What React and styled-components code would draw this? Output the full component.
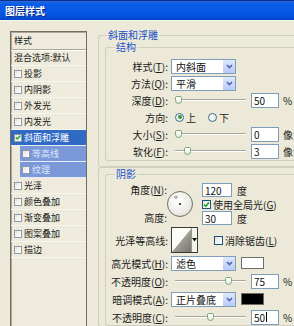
import styled, { createGlobalStyle } from "styled-components"

const GlobalStyle = createGlobalStyle`
  html, body { margin: 0; padding: 0; background: #ece9d8; }
  body { font-family: "Noto Sans CJK SC", "Noto Sans", sans-serif; }
`

const effects = [
    { name: "投影" },
    { name: "内阴影" },
    { name: "外发光" },
    { name: "内发光" },
    { name: "斜面和浮雕", checked: true, selected: true },
    { name: "等高线", sub: true },
    { name: "纹理", sub: true },
    { name: "光泽" },
    { name: "颜色叠加" },
    { name: "渐变叠加" },
    { name: "图案叠加" },
    { name: "描边" },
]

function Check({ color = "#21a121" }) {
    return (
        <svg width="7" height="7" viewBox="0 0 7 7">
            <polyline points="1,3.5 2.8,5.3 6,1.5" fill="none" stroke={color} strokeWidth="1.6" />
        </svg>
    )
}

function Chevron() {
    return (
        <svg width="7" height="5" viewBox="0 0 7 5">
            <polyline points="1,1 3.5,3.5 6,1" fill="none" stroke="#4d64a8" strokeWidth="1.6" />
        </svg>
    )
}

function Dropdown({ value }) {
    return (
        <Select>
            <SelectText>{value}</SelectText>
            <DropBtn><Chevron /></DropBtn>
        </Select>
    )
}

function Slider({ pos }) {
    return (
        <Track>
            <Thumb $pos={pos} />
        </Track>
    )
}

export default function App() {
    return (
        <>
            <GlobalStyle />
            <Window>
                <TitleBar>图层样式</TitleBar>
                <Body>
                    <StyleList>
                        <ListHeader>样式</ListHeader>
                        <ListRow>混合选项:默认</ListRow>
                        {effects.map((e) =>
                            <ListRow key={e.name} $selected={e.selected} $sub={e.sub}>
                                <ListBox>{e.checked && <Check />}</ListBox>
                                <span>{e.name}</span>
                            </ListRow>)}
                    </StyleList>

                    <RightPane>
                        <Group $pb={5}>
                            <Legend $ml={2}>斜面和浮雕</Legend>
                            <SubGroup $pt={5} $pb={1}>
                                <Legend $ml={9}>结构</Legend>
                                <Rows $gap={1}>
                                    <Row>
                                        <Label>样式(<u>T</u>):</Label>
                                        <Dropdown value="内斜面" />
                                    </Row>
                                    <Row>
                                        <Label>方法(<u>Q</u>):</Label>
                                        <Dropdown value="平滑" />
                                    </Row>
                                    <Row>
                                        <Label>深度(<u>D</u>):</Label>
                                        <Slider pos={0} />
                                        <Input>50</Input>
                                        <Unit>%</Unit>
                                    </Row>
                                    <Row>
                                        <Label>方向:</Label>
                                        <RadioGroup>
                                            <Radio $on />
                                            <RadioText>上</RadioText>
                                            <Radio />
                                            <RadioText>下</RadioText>
                                        </RadioGroup>
                                    </Row>
                                    <Row>
                                        <Label>大小(<u>S</u>):</Label>
                                        <Slider pos={0} />
                                        <Input>0</Input>
                                        <Unit>像素</Unit>
                                    </Row>
                                    <Row>
                                        <Label>软化(<u>F</u>):</Label>
                                        <Slider pos={9} />
                                        <Input>3</Input>
                                        <Unit>像素</Unit>
                                    </Row>
                                </Rows>
                            </SubGroup>
                        </Group>

                        <Group>
                            <SubGroup $pt={3}>
                                <Legend $ml={9}>阴影</Legend>
                                <Rows $gap={2}>
                                    <AngleBlock>
                                        <AngleLabels>
                                            <span>角度(<u>N</u>):</span>
                                            <span>高度:</span>
                                        </AngleLabels>
                                        <Dial>
                                            <svg width="24" height="24" viewBox="0 0 24 24">
                                                <circle cx="12" cy="12" r="1.1" fill="#222" />
                                                <path d="M8 3.2 v4 M6 5.2 h4" stroke="#8a8f9a" strokeWidth="0.9" />
                                            </svg>
                                        </Dial>
                                        <AngleFields>
                                            <FieldRow>
                                                <Input $w={30} $h={14}>120</Input>
                                                <Unit $ml={5}>度</Unit>
                                            </FieldRow>
                                            <FieldRow>
                                                <CheckBox><Check /></CheckBox>
                                                <CheckText>使用全局光(<u>G</u>)</CheckText>
                                            </FieldRow>
                                            <FieldRow>
                                                <Input $w={30} $h={14}>30</Input>
                                                <Unit $ml={5}>度</Unit>
                                            </FieldRow>
                                        </AngleFields>
                                    </AngleBlock>

                                    <Row $h={26}>
                                        <Label>光泽等高线:</Label>
                                        <Contour>
                                            <svg width="19" height="24" viewBox="0 0 19 24">
                                                <defs>
                                                    <linearGradient id="cg" x1="0" y1="0" x2="1" y2="1">
                                                        <stop offset="0" stopColor="#c9c7bd" />
                                                        <stop offset="1" stopColor="#76746c" />
                                                    </linearGradient>
                                                </defs>
                                                <rect width="19" height="24" fill="#fbfbf8" />
                                                <polygon points="0,24 19,1 19,24" fill="url(#cg)" />
                                            </svg>
                                            <ContourArrow>
                                                <svg width="5" height="4" viewBox="0 0 5 4">
                                                    <polygon points="0,0 5,0 2.5,3.5" fill="#111" />
                                                </svg>
                                            </ContourArrow>
                                        </Contour>
                                        <CheckBox $ml={16} />
                                        <CheckText>消除锯齿(<u>L</u>)</CheckText>
                                    </Row>

                                    <Row>
                                        <Label>高光模式(<u>H</u>):</Label>
                                        <Dropdown value="滤色" />
                                        <Swatch $color="#ffffff" />
                                    </Row>
                                    <Row>
                                        <Label>不透明度(<u>O</u>):</Label>
                                        <Slider pos={50} />
                                        <Input>75</Input>
                                        <Unit>%</Unit>
                                    </Row>
                                    <Row>
                                        <Label>暗调模式(<u>A</u>):</Label>
                                        <Dropdown value="正片叠底" />
                                        <Swatch $color="#000000" />
                                    </Row>
                                    <Row>
                                        <Label>不透明度(<u>C</u>):</Label>
                                        <Slider pos={32} />
                                        <Input>50<Caret /></Input>
                                        <Unit>%</Unit>
                                        <RedMark />
                                    </Row>
                                </Rows>
                            </SubGroup>
                        </Group>
                    </RightPane>
                </Body>
            </Window>
        </>
    )
}

const Window = styled.div`
width: 294px;
height: 326px;
overflow: hidden;
background: #ece9d8;
display: flex;
flex-direction: column;
`

const TitleBar = styled.div`
height: 20px;
flex-shrink: 0;
box-sizing: border-box;
padding-left: 5px;
display: flex;
align-items: center;
background: linear-gradient(#2a66d8 0, #0a5de9 3px, #0659e7 55%, #0450dc 85%, #0340c0 100%);
border-top: 1px solid #0b2f92;
color: #ffffff;
font-size: 10px;
font-weight: 700;
text-shadow: 1px 1px #0a2a80;
`

const Body = styled.div`
flex: 1;
min-height: 0;
display: flex;
align-items: flex-start;
padding: 8px 0 0 10px;
border-top: 1px solid #f8f7f1;
`

const StyleList = styled.div`
width: 77px;
height: 300px;
margin-top: 2px;
flex-shrink: 0;
box-sizing: border-box;
border: 1px solid #716f64;
box-shadow: inset 1px 1px #aca899;
background: #eeebdc;
display: flex;
flex-direction: column;
`

const ListHeader = styled.div`
height: 18px;
box-sizing: border-box;
padding-left: 3px;
display: flex;
align-items: center;
font-size: 9px;
color: #1a1a1a;
border-bottom: 1px solid #aca899;
box-shadow: 0 1px #ffffff;
`

const ListRow = styled.div`
height: 16px;
flex-shrink: 0;
box-sizing: border-box;
margin-left: ${p => p.$sub ? 9 : 0}px;
padding-left: ${p => p.$sub ? 2 : 3}px;
display: flex;
align-items: center;
gap: 2px;
font-size: 9px;
white-space: nowrap;
color: ${p => p.$selected ? "#ffffff" : p.$sub ? "#dce6fb" : "#1a1a1a"};
background: ${p => p.$selected ? "#316ac5" : p.$sub ? "#7b98d8" : "transparent"};
border-bottom: 1px solid ${p => p.$selected || p.$sub ? "#e8ecf6" : "#f7f6ef"};
`

const ListBox = styled.span`
width: 8px;
height: 8px;
flex-shrink: 0;
box-sizing: border-box;
border: 1px solid #8d99a8;
background: linear-gradient(135deg, #e6e5df, #ffffff);
display: flex;
align-items: center;
justify-content: center;
`

const RightPane = styled.div`
width: 222px;
margin-left: 11px;
flex-shrink: 0;
`

const Group = styled.fieldset`
margin: 0;
min-width: 0;
padding: 0 0 ${p => p.$pb || 0}px 6px;
border: 1px solid #d0d0bf;
border-right: none;
border-radius: 3px 0 0 3px;
`

const SubGroup = styled.fieldset`
margin: 0;
min-width: 0;
padding: ${p => p.$pt || 0}px 0 ${p => p.$pb || 0}px 0;
border: 1px solid #d0d0bf;
border-right: none;
border-radius: 3px 0 0 3px;
`

const Legend = styled.legend`
margin-left: ${p => p.$ml}px;
padding: 0 1px;
font-size: 10px;
line-height: 12px;
color: #1a50c8;
`

const Rows = styled.div`
display: flex;
flex-direction: column;
gap: ${p => p.$gap}px;
`

const Row = styled.div`
height: ${p => p.$h || 16}px;
display: flex;
align-items: center;
`

const Label = styled.span`
width: 62px;
margin-right: 3px;
flex-shrink: 0;
text-align: right;
font-size: 10px;
color: #1a1a1a;
white-space: nowrap;
`

const Select = styled.div`
width: 65px;
height: 15px;
flex-shrink: 0;
box-sizing: border-box;
border: 1px solid #7f9db9;
background: #ffffff;
display: flex;
align-items: center;
`

const SelectText = styled.span`
flex: 1;
padding-left: 4px;
font-size: 10px;
color: #111111;
white-space: nowrap;
`

const DropBtn = styled.span`
width: 12px;
height: 13px;
border-radius: 1px;
background: linear-gradient(#dde7fd, #b7cbf7);
display: flex;
align-items: center;
justify-content: center;
`

const Track = styled.div`
position: relative;
width: 71px;
height: 16px;
margin-left: 4px;
flex-shrink: 0;
&::before {
    content: "";
    position: absolute;
    left: 0;
    right: 0;
    top: 7px;
    border-top: 1px solid #a9a798;
    border-bottom: 1px solid #ffffff;
}
`

const Thumb = styled.span`
position: absolute;
left: ${p => p.$pos}px;
top: 4px;
width: 7px;
height: 8px;
box-sizing: border-box;
border: 1px solid #7aa77a;
border-radius: 2px 2px 4px 4px;
background: linear-gradient(#ffffff, #e4efe0);
`

const Input = styled.div`
width: ${p => p.$w || 28}px;
height: ${p => p.$h || 15}px;
margin-left: ${p => p.$w ? 0 : 5}px;
flex-shrink: 0;
box-sizing: border-box;
border: 1px solid #7f9db9;
background: #ffffff;
padding-left: 2px;
display: flex;
align-items: center;
font-size: 10px;
color: #111111;
`

const Caret = styled.span`
width: 1px;
height: 10px;
margin-left: 1px;
background: #000000;
`

const Unit = styled.span`
margin-left: ${p => p.$ml || 4}px;
font-size: 10px;
color: #1a1a1a;
white-space: nowrap;
`

const RedMark = styled.span`
width: 2px;
height: 8px;
margin-left: 2px;
align-self: flex-end;
background: #e03a2a;
`

const RadioGroup = styled.div`
margin-left: 4px;
display: flex;
align-items: center;
`

const Radio = styled.span`
width: 9px;
height: 9px;
box-sizing: border-box;
border: 1px solid #3d6e96;
border-radius: 50%;
background: radial-gradient(circle at 40% 40%, #ffffff, #e2e1da);
display: flex;
align-items: center;
justify-content: center;
&::after {
    content: "";
    display: ${p => p.$on ? "block" : "none"};
    width: 4px;
    height: 4px;
    border-radius: 50%;
    background: #2d9a36;
}
`

const RadioText = styled.span`
margin: 0 12px 0 2px;
font-size: 10px;
color: #1a1a1a;
`

const CheckBox = styled.span`
width: 9px;
height: 9px;
margin-left: ${p => p.$ml || 0}px;
flex-shrink: 0;
box-sizing: border-box;
border: 1px solid #1c5180;
background: linear-gradient(135deg, #e4e3dc, #ffffff);
display: flex;
align-items: center;
justify-content: center;
`

const CheckText = styled.span`
margin-left: 2px;
font-size: 10px;
color: #1a1a1a;
white-space: nowrap;
`

const AngleBlock = styled.div`
height: 42px;
display: flex;
`

const AngleLabels = styled.div`
width: 61px;
flex-shrink: 0;
display: flex;
flex-direction: column;
justify-content: space-between;
align-items: flex-end;
font-size: 10px;
line-height: 14px;
color: #1a1a1a;
white-space: nowrap;
`

const Dial = styled.div`
width: 26px;
height: 26px;
align-self: center;
flex-shrink: 0;
box-sizing: border-box;
border: 1px solid #6f6e66;
border-radius: 50%;
background: radial-gradient(circle at 40% 35%, #ffffff, #ebeae3 65%, #c9c7bb);
display: flex;
align-items: center;
justify-content: center;
`

const AngleFields = styled.div`
margin-left: 9px;
display: flex;
flex-direction: column;
`

const FieldRow = styled.div`
height: 14px;
display: flex;
align-items: center;
`

const Contour = styled.div`
height: 26px;
flex-shrink: 0;
box-sizing: border-box;
border: 1px solid #3a3a36;
display: flex;
`

const ContourArrow = styled.span`
width: 5px;
background: #f4f3ee;
border-left: 1px solid #9a988c;
display: flex;
align-items: center;
justify-content: center;
`

const Swatch = styled.span`
width: 23px;
height: 12px;
margin-left: 5px;
flex-shrink: 0;
box-sizing: border-box;
border: 1px solid #6d6c66;
background: ${p => p.$color};
`
